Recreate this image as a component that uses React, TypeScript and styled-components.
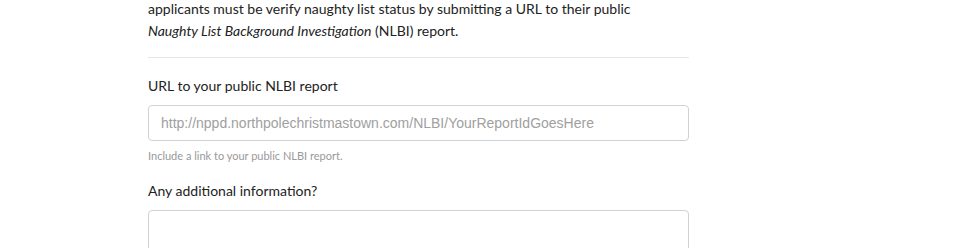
import { FC } from "react";

import styled, { createGlobalStyle } from "styled-components";

const GlobalStyle = createGlobalStyle`
  html, body {
    margin: 0;
    padding: 0;
    background: #ffffff;
  }

  body {
    font-family: Lato, "Open Sans", sans-serif;
    color: #222222;
    overflow: hidden;
  }
`;

const App: FC = () => {
  return (
    <>
      <GlobalStyle />
      <Page>
        <Intro>
          applicants must be verify naughty list status by submitting a URL to
          their public
          <br />
          <em>Naughty List Background Investigation</em> (NLBI) report.
        </Intro>

        <Divider />

        <FormGroup>
          <Label htmlFor="nlbi-url">URL to your public NLBI report</Label>
          <Input
            id="nlbi-url"
            type="text"
            placeholder="http://nppd.northpolechristmastown.com/NLBI/YourReportIdGoesHere"
          />
          <HelpBlock>Include a link to your public NLBI report.</HelpBlock>
        </FormGroup>

        <FormGroup>
          <Label htmlFor="extra-info">Any additional information?</Label>
          <TextArea id="extra-info" rows={5} />
        </FormGroup>
      </Page>
    </>
  );
};

const Page = styled.div`
  width: 541px;
  padding-left: 148px;
`;

const Intro = styled.p`
  margin: -2px 0 0;
  font-size: 14px;
  line-height: 22px;

  em {
    font-style: italic;
  }
`;

const Divider = styled.hr`
  margin: 15px 0 0;
  border: 0;
  border-top: 1px solid #e6e6e6;
`;

const FormGroup = styled.div`
  display: flex;
  flex-direction: column;
  margin-top: 17px;
`;

const Label = styled.label`
  font-size: 14px;
  line-height: 22px;
  font-weight: 400;
  margin-bottom: 8px;
`;

const Input = styled.input`
  box-sizing: border-box;
  width: 100%;
  height: 36px;
  margin: 0;
  padding: 0 12px;

  border: 1px solid #cfd2d8;
  border-radius: 4px;
  font-family: "Liberation Sans", Arial, sans-serif;
  font-size: 14px;
  color: #333333;

  &::placeholder {
    color: #a0a0a0;
  }
`;

const HelpBlock = styled.span`
  margin-top: 7px;
  font-size: 11px;
  line-height: 15px;
  color: #999999;
`;

const TextArea = styled.textarea`
  display: block;
  box-sizing: border-box;
  width: 100%;
  height: 110px;
  margin: 0;
  padding: 8px 12px;
  resize: vertical;

  border: 1px solid #cfd2d8;
  border-radius: 4px;
  font-family: "Liberation Sans", Arial, sans-serif;
  font-size: 14px;
`;

export default App;
